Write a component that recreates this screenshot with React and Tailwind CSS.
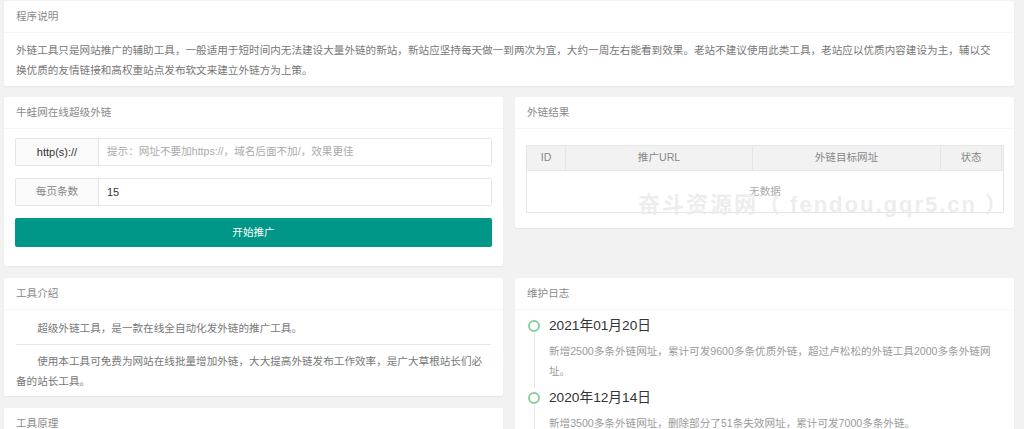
import React from "react";

const font = { fontFamily: '"Liberation Sans", "Noto Sans CJK SC", sans-serif' };

function Card({ title, children, className = "", bodyClass = "" }) {
  return (
    <div className={`relative bg-white rounded-[2px] shadow-[0_1px_2px_0_rgba(0,0,0,0.05)] ${className}`}>
      <div className="h-[32px] flex items-center px-[12px] border-b border-[#f6f6f6] text-[10.6px] text-[#8a8a8a]">
        {title}
      </div>
      <div className={bodyClass}>{children}</div>
    </div>
  );
}

function InputRow({ label, labelClass, children }) {
  return (
    <div className="flex h-[28px] border border-[#e6e6e6] rounded-[2px]">
      <div className={`w-[83px] shrink-0 flex items-center justify-center bg-[#fafafa] border-r border-[#e6e6e6] ${labelClass}`}>
        {label}
      </div>
      <div className="flex-1 flex items-center px-[8px] text-[10.6px]">{children}</div>
    </div>
  );
}

function TimelineItem({ date, text, last }) {
  return (
    <div className="flex">
      <div className="w-[12px] ml-[2px] flex flex-col items-center shrink-0">
        <div className="w-[12px] h-[12px] mt-[4px] rounded-full border-2 border-[#8ccf9c] bg-white" />
        <div className="flex-1 w-px bg-[#e6e6e6] mt-[1px]" />
      </div>
      <div className={`flex-1 pl-[9px] ${last ? "" : "pb-[7px]"}`}>
        <div className="h-[20px] leading-[20px] text-[13.7px] text-[#333]">{date}</div>
        <div className="mt-[5px] text-[10.6px] leading-[20px] text-[#9a9a9a]">{text}</div>
      </div>
    </div>
  );
}

export default function App() {
  return (
    <div style={font} className="min-h-screen bg-[#f2f2f2] pl-[4px] pr-[10px] pt-[1px] overflow-hidden">
      {/* 程序说明 */}
      <Card title="程序说明" bodyClass="pl-[12px] pr-[14px] pt-[7px] pb-[6px] text-[10.6px] leading-[20px] text-[#777]">
        外链工具只是网站推广的辅助工具，一般适用于短时间内无法建设大量外链的新站，新站应坚持每天做一到两次为宜，大约一周左右能看到效果。老站不建议使用此类工具，老站应以优质内容建设为主，辅以交换优质的友情链接和高权重站点发布软文来建立外链方为上策。
      </Card>

      <div className="grid grid-cols-2 gap-x-[12px] mt-[11px] items-start">
        <Card title="牛蛙网在线超级外链" bodyClass="px-[11px] pt-[9px] pb-[19px] flex flex-col gap-[12px]">
          <InputRow label="http(s)://" labelClass="text-[11px] text-[#333]">
            <span className="text-[#aaa]">提示：网址不要加https://，域名后面不加/，效果更佳</span>
          </InputRow>
          <InputRow label="每页条数" labelClass="text-[10.6px] text-[#888]">
            <span className="text-[11px] text-[#333]">15</span>
          </InputRow>
          <button className="h-[29px] w-full bg-[#009688] rounded-[2px] text-white text-[10.6px]">
            开始推广
          </button>
        </Card>

        <Card title="外链结果" bodyClass="pl-[11px] pr-[10px] pt-[16px] pb-[15px]">
          <div className="border border-[#e6e6e6] text-[10.6px]">
            <div className="flex h-[25px] bg-[#f2f2f2] text-[#888] border-b border-[#e6e6e6]">
              <div className="w-[39px] flex items-center justify-center border-r border-[#e6e6e6]">ID</div>
              <div className="w-[187px] flex items-center justify-center border-r border-[#e6e6e6]">推广URL</div>
              <div className="w-[188px] flex items-center justify-center border-r border-[#e6e6e6]">外链目标网址</div>
              <div className="w-[61px] flex items-center justify-center border-r border-[#e6e6e6]">状态</div>
              <div className="flex-1" />
            </div>
            <div className="h-[41px] flex items-center justify-center text-[#aaa]">无数据</div>
          </div>
          <div className="absolute left-[123px] top-[96px] leading-[24px] whitespace-nowrap text-[22px] tracking-[2px] font-bold text-[#ebebeb]/90 pointer-events-none">
            奋斗资源网（ fendou.gqr5.cn ）
          </div>
        </Card>
      </div>

      <div className="grid grid-cols-2 gap-x-[12px] mt-[12px] items-start">
        <div className="flex flex-col gap-[12px]">
          <Card title="工具介绍" bodyClass="px-[12px] pt-[8px] pb-[5px] text-[10.6px] leading-[20px] text-[#777]">
            <p className="indent-[2em]">超级外链工具，是一款在线全自动化发外链的推广工具。</p>
            <hr className="my-[6px] border-[#e6e6e6]" />
            <p className="indent-[2em]">
              使用本工具可免费为网站在线批量增加外链，大大提高外链发布工作效率，是广大草根站长们必备的站长工具。
            </p>
          </Card>
          <Card title="工具原理" bodyClass="px-[12px] pt-[8px] pb-[8px] text-[10.6px] leading-[20px] text-[#777]">
            <p className="indent-[2em]">通过大量的站长工具查询类网站，自动生成外链页面，提交后被搜索引擎抓取收录。</p>
          </Card>
        </div>

        <Card title="维护日志" bodyClass="pl-[11px] pr-[11px] pt-[6px] pb-[10px]">
          <TimelineItem
            date="2021年01月20日"
            text="新增2500多条外链网址，累计可发9600多条优质外链，超过卢松松的外链工具2000多条外链网址。"
          />
          <TimelineItem
            date="2020年12月14日"
            text="新增3500多条外链网址，删除部分了51条失效网址，累计可发7000多条外链。"
          />
          <TimelineItem date="2020年11月02日" text="上线超级外链工具。" last />
        </Card>
      </div>
    </div>
  );
}
